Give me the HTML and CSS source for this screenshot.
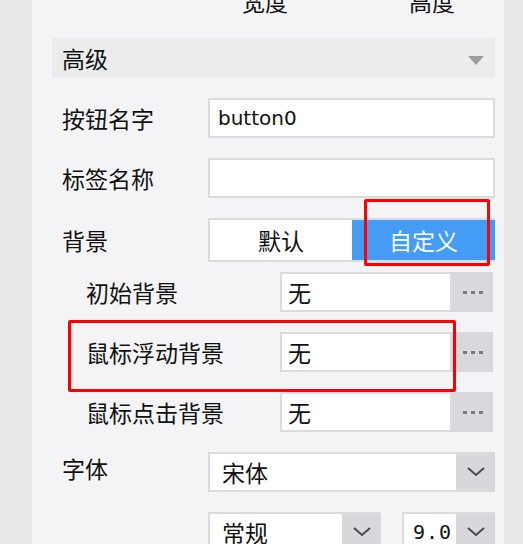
FILE: index.html
```html
<!DOCTYPE html>
<html lang="zh-CN">
<head>
    <meta charset="UTF-8">
    <title>属性</title>
    <link rel="stylesheet" href="styles.css">
</head>
<body>
    <div class="frame">
        <div class="panel">
            <div class="head"><span>宽度</span><span>高度</span></div>

            <div class="section">高级<i class="tri"></i></div>

            <div class="rows">
                <div class="row">
                    <label class="label">按钮名字</label>
                    <div class="field latin">button0</div>
                </div>
                <div class="row">
                    <label class="label">标签名称</label>
                    <div class="field"></div>
                </div>
                <div class="row toggle-row">
                    <label class="label">背景</label>
                    <div class="toggle">
                        <span class="opt">默认</span>
                        <span class="opt on">自定义</span>
                    </div>
                    <div class="mark mark-toggle"></div>
                </div>

                <div class="subrows">
                    <div class="row sub">
                        <label class="label">初始背景</label>
                        <div class="field">无</div>
                        <div class="more"><i></i><i></i><i></i></div>
                    </div>
                    <div class="row sub">
                        <label class="label">鼠标浮动背景</label>
                        <div class="field">无</div>
                        <div class="more"><i></i><i></i><i></i></div>
                        <div class="mark mark-row"></div>
                    </div>
                    <div class="row sub">
                        <label class="label">鼠标点击背景</label>
                        <div class="field">无</div>
                        <div class="more"><i></i><i></i><i></i></div>
                    </div>
                </div>

                <div class="row font-row">
                    <label class="label">字体</label>
                    <div class="select wide">
                        <span class="value">宋体</span>
                        <span class="drop"><svg width="20" height="12" viewBox="0 0 20 12"><path d="M2 2 L10 9 L18 2" fill="none" stroke="#4a4a4a" stroke-width="2"/></svg></span>
                    </div>
                </div>
                <div class="row">
                    <label class="label"></label>
                    <div class="select style">
                        <span class="value">常规</span>
                        <span class="drop"><svg width="20" height="12" viewBox="0 0 20 12"><path d="M2 2 L10 9 L18 2" fill="none" stroke="#4a4a4a" stroke-width="2"/></svg></span>
                    </div>
                    <div class="select size">
                        <span class="value mono">9.0</span>
                        <span class="drop"><svg width="20" height="12" viewBox="0 0 20 12"><path d="M2 2 L10 9 L18 2" fill="none" stroke="#4a4a4a" stroke-width="2"/></svg></span>
                    </div>
                </div>
            </div>
        </div>
    </div>
</body>
</html>
```

FILE: styles.css
```css
body{
    margin: 0;
    background: #e8e8e8;
    font-family: "Noto Sans CJK SC", "Noto Sans", sans-serif;
    font-size: 23px;
    color: #111;
}

.frame{
    display: flex;
    height: 544px;
    overflow: hidden;
}

.panel{
    margin-left: 32px;
    width: 472px;
    box-sizing: border-box;
    padding: 0 9px 0 20px;
    background: #f4f4f6;
}

.head{
    height: 38px;
    display: flex;
    gap: 121px;
    padding-left: 190px;
    line-height: 23px;
}

.head span{
    margin-top: -10px;
}

.section{
    height: 40px;
    display: flex;
    align-items: center;
    justify-content: space-between;
    padding: 0 11px 0 10px;
    background: #ececec;
}

.tri{
    width: 0;
    height: 0;
    border-top: 9px solid #9c9c9c;
    border-left: 8px solid transparent;
    border-right: 8px solid transparent;
    margin-top: 4px;
}

.rows{
    margin-top: 20px;
    display: flex;
    flex-direction: column;
    gap: 20px;
}

.row{
    position: relative;
    display: flex;
    align-items: center;
    height: 40px;
}

.label{
    width: 156px;
    flex: none;
    box-sizing: border-box;
    padding-left: 10px;
}

.field{
    flex: 1;
    height: 40px;
    box-sizing: border-box;
    border: 2px solid #dcdcdc;
    background: #fff;
    padding-left: 8px;
    display: flex;
    align-items: center;
}

.latin{
    font-family: "DejaVu Sans", sans-serif;
    font-size: 20px;
}

.toggle-row{
    height: 44px;
}

.toggle{
    flex: 1;
    height: 44px;
    box-sizing: border-box;
    display: flex;
    border: 2px solid #dcdcdc;
    border-right: 0;
    background: #fff;
}

.opt{
    width: 142px;
    display: flex;
    align-items: center;
    justify-content: center;
}

.opt.on{
    flex: 1;
    background: #449cf5;
    color: #fff;
}

.mark{
    position: absolute;
    box-sizing: border-box;
    border: 3px solid #ff0000;
    border-radius: 2px;
}

.mark-toggle{
    left: 312px;
    top: -19px;
    width: 126px;
    height: 67px;
}

.subrows{
    margin-top: -10px;
    display: flex;
    flex-direction: column;
    gap: 20px;
}

.sub .label{
    width: 228px;
    padding-left: 34px;
}

.sub .field{
    padding-left: 6px;
}

.more{
    width: 41px;
    height: 40px;
    margin-right: 2px;
    background: #d9d9dd;
    display: flex;
    align-items: center;
    justify-content: center;
    gap: 4px;
}

.more i{
    width: 4px;
    height: 3px;
    background: #7a7a7a;
}

.mark-row{
    left: 16px;
    top: -12px;
    width: 388px;
    height: 72px;
}

.font-row .label{
    padding-bottom: 8px;
}

.select{
    height: 40px;
    box-sizing: border-box;
    display: flex;
    border: 2px solid #dcdcdc;
    border-right: 0;
    background: #fff;
}

.select .value{
    flex: 1;
    display: flex;
    align-items: center;
    padding-left: 12px;
}

.select .drop{
    width: 39px;
    background: #d8d8dc;
    display: flex;
    align-items: center;
    justify-content: center;
}

.wide{
    flex: 1;
}

.style{
    width: 173px;
    margin-right: 21px;
}

.size{
    flex: 1;
}

.size .value{
    padding-left: 9px;
}

.mono{
    font-family: "DejaVu Sans Mono", monospace;
    font-size: 20px;
    letter-spacing: 1px;
}
```
